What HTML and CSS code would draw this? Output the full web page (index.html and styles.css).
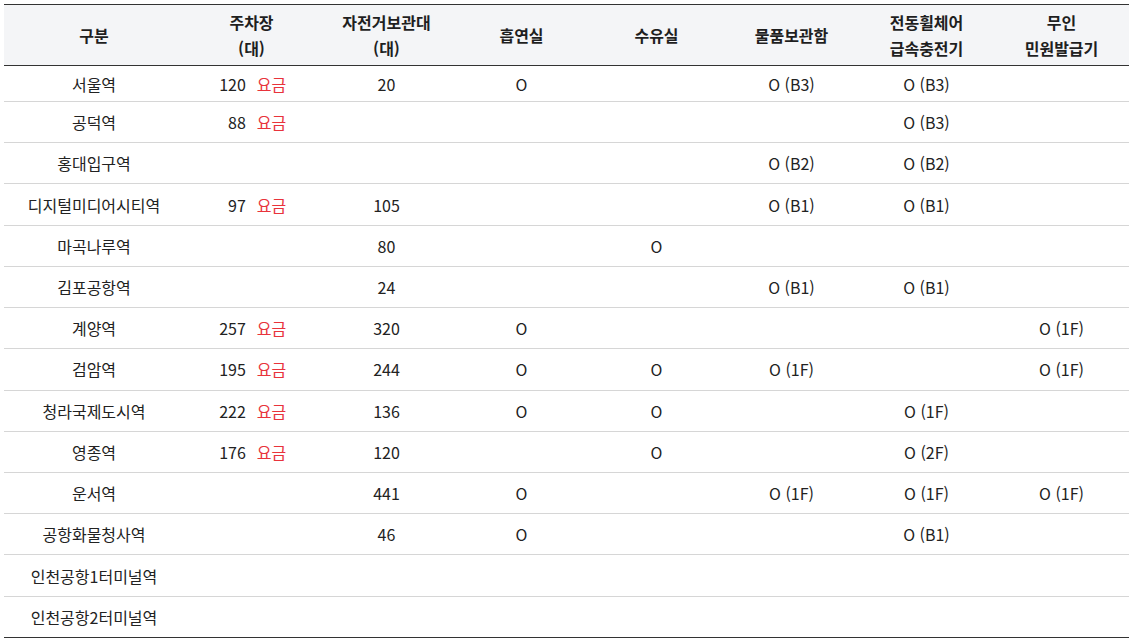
FILE: index.html
```html
<!DOCTYPE html>
<html lang="ko">
<head>
<meta charset="utf-8">
<title>역사 편의시설</title>
<link rel="stylesheet" href="styles.css">
</head>
<body>
<table class="facility">
  <colgroup>
    <col class="c-name">
    <col class="c-col"><col class="c-col"><col class="c-col"><col class="c-col"><col class="c-col"><col class="c-col"><col class="c-col">
  </colgroup>
  <thead>
    <tr>
      <th>구분</th>
      <th>주차장<br>(대)</th>
      <th>자전거보관대<br>(대)</th>
      <th>흡연실</th>
      <th>수유실</th>
      <th>물품보관함</th>
      <th>전동휠체어<br>급속충전기</th>
      <th>무인<br>민원발급기</th>
    </tr>
  </thead>
  <tbody>
    <tr class="first">
      <td>서울역</td>
      <td><span class="park"><span class="num">120</span><span class="fee">요금</span></span></td>
      <td>20</td><td>O</td><td></td><td>O (B3)</td><td>O (B3)</td><td></td>
    </tr>
    <tr>
      <td>공덕역</td>
      <td><span class="park"><span class="num">88</span><span class="fee">요금</span></span></td>
      <td></td><td></td><td></td><td></td><td>O (B3)</td><td></td>
    </tr>
    <tr>
      <td>홍대입구역</td>
      <td></td><td></td><td></td><td></td><td>O (B2)</td><td>O (B2)</td><td></td>
    </tr>
    <tr>
      <td>디지털미디어시티역</td>
      <td><span class="park"><span class="num">97</span><span class="fee">요금</span></span></td>
      <td>105</td><td></td><td></td><td>O (B1)</td><td>O (B1)</td><td></td>
    </tr>
    <tr>
      <td>마곡나루역</td>
      <td></td><td>80</td><td></td><td>O</td><td></td><td></td><td></td>
    </tr>
    <tr>
      <td>김포공항역</td>
      <td></td><td>24</td><td></td><td></td><td>O (B1)</td><td>O (B1)</td><td></td>
    </tr>
    <tr>
      <td>계양역</td>
      <td><span class="park"><span class="num">257</span><span class="fee">요금</span></span></td>
      <td>320</td><td>O</td><td></td><td></td><td></td><td>O (1F)</td>
    </tr>
    <tr>
      <td>검암역</td>
      <td><span class="park"><span class="num">195</span><span class="fee">요금</span></span></td>
      <td>244</td><td>O</td><td>O</td><td>O (1F)</td><td></td><td>O (1F)</td>
    </tr>
    <tr>
      <td>청라국제도시역</td>
      <td><span class="park"><span class="num">222</span><span class="fee">요금</span></span></td>
      <td>136</td><td>O</td><td>O</td><td></td><td>O (1F)</td><td></td>
    </tr>
    <tr>
      <td>영종역</td>
      <td><span class="park"><span class="num">176</span><span class="fee">요금</span></span></td>
      <td>120</td><td></td><td>O</td><td></td><td>O (2F)</td><td></td>
    </tr>
    <tr>
      <td>운서역</td>
      <td></td><td>441</td><td>O</td><td></td><td>O (1F)</td><td>O (1F)</td><td>O (1F)</td>
    </tr>
    <tr>
      <td>공항화물청사역</td>
      <td></td><td>46</td><td>O</td><td></td><td></td><td>O (B1)</td><td></td>
    </tr>
    <tr>
      <td>인천공항1터미널역</td>
      <td></td><td></td><td></td><td></td><td></td><td></td><td></td>
    </tr>
    <tr>
      <td>인천공항2터미널역</td>
      <td></td><td></td><td></td><td></td><td></td><td></td><td></td>
    </tr>
  </tbody>
</table>
</body>
</html>
```

FILE: styles.css
```css
html, body {
  margin: 0;
  padding: 0;
  background: #ffffff;
}
body {
  padding: 4px 3px 0 4px;
  font-family: "Noto Sans CJK KR", "Noto Sans", sans-serif;
  color: #222222;
}
.facility {
  width: 1125px;
  border-collapse: collapse;
  table-layout: fixed;
  border-top: 1px solid #333333;
  border-bottom: 1px solid #333333;
  font-size: 16px;
}
.c-name { width: 180px; }
.c-col { width: 135px; }
.facility th {
  background: #f4f5f7;
  font-weight: 700;
  font-size: 16px;
  line-height: 26px;
  height: 60px;
  padding: 0;
  text-align: center;
  vertical-align: middle;
  border-bottom: 1px solid #333333;
  color: #1f1f1f;
}
.facility td {
  height: 40.23px;
  padding: 0;
  text-align: center;
  vertical-align: middle;
  line-height: 22px;
  border-bottom: 1px solid #d6d6d6;
}
.facility tr.first td {
  height: 35px;
}
.facility tbody tr:last-child td {
  border-bottom: 1px solid #333333;
}
.park {
  display: inline-flex;
  align-items: center;
}
.num {
  display: inline-block;
  width: 29px;
  text-align: right;
  margin-right: 11px;
}
.fee {
  color: #e8333b;
}
```
